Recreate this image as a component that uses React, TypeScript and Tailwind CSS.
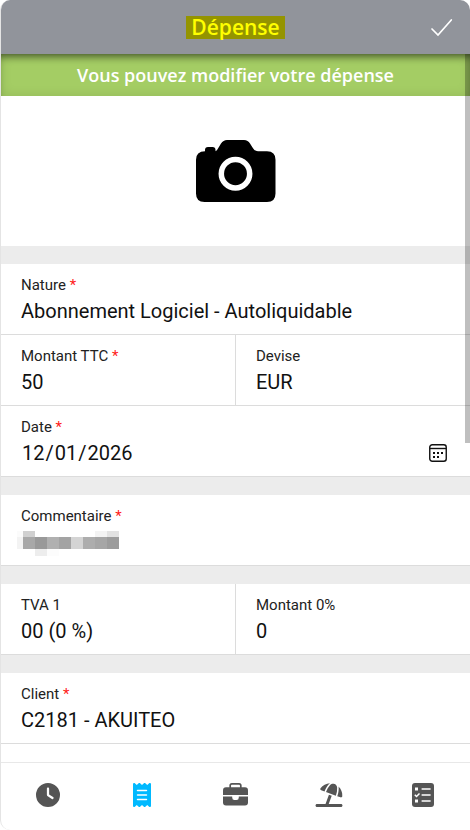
import React, { useRef } from 'react';
import { FaClock, FaReceipt, FaUmbrellaBeach } from 'react-icons/fa6';

interface FieldProps {
  id: string;
  label: string;
  required?: boolean;
  defaultValue?: string;
  className?: string;
  children?: React.ReactNode;
}

const Field = ({ id, label, required, defaultValue, className = '', children }: FieldProps) => (
  <div className={`flex min-w-0 flex-1 flex-col border-b border-[#dcdcdc] bg-white px-5 pt-[11px] pb-[7px] ${className}`}>
    <label htmlFor={id} className="text-[15px] leading-5 text-[#222]">
      {label}
      {required && <span className="text-[#ff1a1a]"> *</span>}
    </label>
    {children ?? (
      <input
        id={id}
        type="text"
        defaultValue={defaultValue}
        className="h-8 w-full min-w-0 bg-transparent text-xl text-[#111] outline-none"
      />
    )}
  </div>
);

const CameraIcon = () => (
  <svg viewBox="0 0 80 64" className="h-16 w-20" aria-hidden="true">
    <path
      d="M9 12.300V11q0-3 3-3h4.500q3 0 3 3v1.300q1.500-.8 2.500-2.800l3-5Q27.300 1 31 1h17q4 0 6 3.500l3 4.800q2 3 5 3h9q8.500 0 8.500 8.500V54.500q0 8.500-8.500 8.500H8.500Q0 63 0 54.500V20.800Q0 12.500 9 12.300Z"
      fill="#000"
    />
    <circle cx="39.500" cy="34.700" r="14.200" fill="none" stroke="#fff" strokeWidth="5.500" />
  </svg>
);

const CalendarIcon = () => (
  <svg viewBox="0 0 18 18" className="size-[18px]" fill="none" stroke="#111" aria-hidden="true">
    <rect x="0.75" y="0.75" width="16.500" height="16.500" rx="2.500" strokeWidth="1.400" />
    <path d="M1 4.500h16" strokeWidth="1.400" />
    <path d="M4 9h2M8 9h2M12 9h2M4 13h2M8 13h2" strokeWidth="2" />
  </svg>
);

const BriefcaseIcon = () => (
  <svg viewBox="0 0 25 24" className="h-6 w-[25px]" fill="currentColor" aria-hidden="true">
    <path
      d="M7.200 5V2.600Q7.200.9 8.900.9h7.200q1.700 0 1.700 1.700V5"
      fill="none"
      stroke="currentColor"
      strokeWidth="1.700"
    />
    <path d="M3 4.300h19q3 0 3 3V12H0V7.300q0-3 3-3Z" />
    <path d="M0 13.500h9.200v1q0 2.500 2.300 2.500h2q2.300 0 2.300-2.500v-1H25v6q0 3-3 3H3q-3 0-3-3Z" />
  </svg>
);

const ChecklistIcon = () => (
  <svg viewBox="0 0 22 24" className="h-6 w-[22px]" aria-hidden="true">
    <rect width="22" height="24" rx="3" fill="currentColor" />
    <path d="M9.600 6h9M9.600 12h9M9.600 18h9" stroke="#fff" strokeWidth="1.700" />
    <path d="M3 4.500h3v3H3zM3 16.500h3v3H3z" fill="#fff" />
    <path d="M2.800 11.800l1.700 1.700L7.500 10.500" fill="none" stroke="#fff" strokeWidth="1.500" />
  </svg>
);

// x, y, width, height, colour of each block laid over the private comment
const blocks: [number, number, number, number, string][] = [
  [0, 0, 6, 6, '#fbfbfb'],
  [6, 0, 12, 6, '#d0d0d0'],
  [78, 0, 12, 6, '#f3f3f3'],
  [90, 0, 12, 6, '#e2e2e2'],
  [0, 6, 6, 12, '#f3f3f3'],
  [6, 6, 12, 12, '#a8a8a8'],
  [18, 6, 12, 12, '#999999'],
  [30, 6, 12, 12, '#b0b0b0'],
  [42, 6, 12, 12, '#a3a3a3'],
  [54, 6, 12, 12, '#d4d4d4'],
  [66, 6, 12, 12, '#adadad'],
  [78, 6, 12, 12, '#a6a6a6'],
  [90, 6, 12, 12, '#9c9c9c'],
  [18, 18, 12, 7, '#ededed'],
  [30, 18, 12, 7, '#fcfcfc'],
];

const CommentMask = () => (
  <svg viewBox="0 0 102 25" className="pointer-events-none absolute top-[5px] -left-1 h-[25px] w-[102px]" aria-hidden="true">
    {blocks.map(([x, y, width, height, fill]) => (
      <rect key={`${x}-${y}`} x={x} y={y} width={width} height={height} fill={fill} />
    ))}
  </svg>
);

const tabs = [
  { href: '#temps', label: 'Temps', icon: <FaClock className="size-6" /> },
  { href: '#depenses', label: 'Dépenses', icon: <FaReceipt className="size-6" />, active: true },
  { href: '#affaires', label: 'Affaires', icon: <BriefcaseIcon /> },
  { href: '#conges', label: 'Congés', icon: <FaUmbrellaBeach className="h-6 w-7" /> },
  { href: '#taches', label: 'Tâches', icon: <ChecklistIcon /> },
];

const App = () => {
  const dateRef = useRef<HTMLInputElement>(null);

  return (
    <div className="flex h-screen flex-col overflow-hidden rounded-[10px] border-l border-[#e4e4e4] bg-white font-[Roboto,sans-serif]">
      <header className="grid h-[54px] shrink-0 grid-cols-[1fr_auto_1fr] items-center bg-[#91949b] px-4">
        <h1 className="col-start-2 bg-[#949400] px-[5px] font-['Open_Sans',sans-serif] text-[21px] leading-[23px] font-semibold text-[#ffff00]">
          Dépense
        </h1>
        <button type="button" aria-label="Valider" className="justify-self-end">
          <svg viewBox="0 0 24 24" className="size-6" fill="none" stroke="#fff" strokeWidth="1.700" strokeLinecap="round">
            <path d="M2 14l6 6L21.300 5" />
          </svg>
        </button>
      </header>

      <div className="relative flex min-h-0 flex-1 flex-col">
        <main className="flex min-h-0 flex-1 flex-col overflow-y-auto [scrollbar-width:none]">
          <p className="flex h-[42px] shrink-0 items-center justify-center bg-[#a4cd64] font-['Open_Sans',sans-serif] text-lg font-semibold text-white shadow-[inset_0_7px_8px_-5px_rgba(0,0,0,0.6),inset_0_0_12px_rgba(0,0,0,0.1)]">
            Vous pouvez modifier votre dépense
          </p>
          <form className="flex flex-col gap-[18px] bg-[#ececec]">
            <button type="button" aria-label="Ajouter une photo" className="flex h-[150px] items-center justify-center bg-white">
              <CameraIcon />
            </button>
            <section>
              <Field id="nature" label="Nature" required defaultValue="Abonnement Logiciel - Autoliquidable" />
              <div className="flex">
                <Field id="montant" label="Montant TTC" required defaultValue="50" />
                <Field id="devise" label="Devise" defaultValue="EUR" className="border-l" />
              </div>
              <Field id="date" label="Date" required>
                <div className="flex h-8 items-center justify-between">
                  <input
                    ref={dateRef}
                    id="date"
                    type="date"
                    defaultValue="2026-12-01"
                    className="bg-transparent text-xl text-[#111] outline-none [&::-webkit-calendar-picker-indicator]:hidden"
                  />
                  <button
                    type="button"
                    aria-label="Ouvrir le calendrier"
                    className="mr-[3px]"
                    onClick={() => dateRef.current?.showPicker()}
                  >
                    <CalendarIcon />
                  </button>
                </div>
              </Field>
            </section>
            <Field id="commentaire" label="Commentaire" required>
              <div className="relative h-8">
                <input id="commentaire" type="text" className="h-8 w-full bg-transparent text-xl text-[#111] outline-none" />
                <CommentMask />
              </div>
            </Field>
            <div className="flex">
              <Field id="tva" label="TVA 1" defaultValue="00 (0 %)" />
              <Field id="montant-tva" label="Montant 0%" defaultValue="0" className="border-l" />
            </div>
            <Field id="client" label="Client" required defaultValue="C2181 - AKUITEO" />
          </form>
        </main>
        <div className="pointer-events-none absolute top-0 right-0 h-[55%] w-[5px] bg-black/25" />
      </div>

      <nav className="flex h-[68px] shrink-0 items-center border-t border-[#e8e8e8] pb-[3px]">
        {tabs.map((tab) => (
          <a
            key={tab.href}
            href={tab.href}
            aria-label={tab.label}
            className={`flex flex-1 justify-center ${tab.active ? 'text-[#00b9ff]' : 'text-[#555]'}`}
          >
            {tab.icon}
          </a>
        ))}
      </nav>
    </div>
  );
};

export default App;
